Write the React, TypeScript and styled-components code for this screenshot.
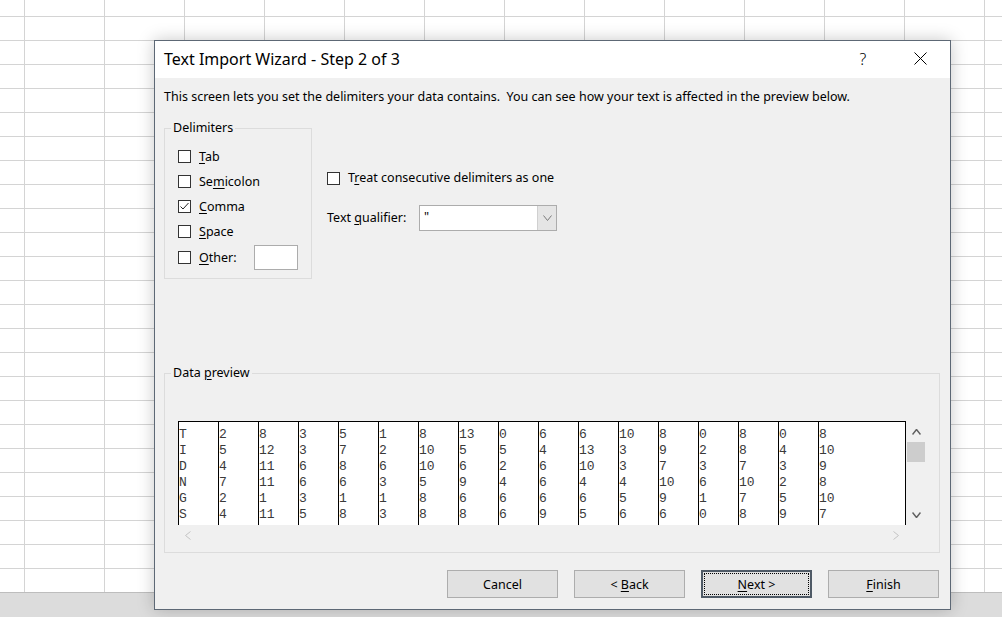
import React from "react";
import styled, { createGlobalStyle } from "styled-components";

const GlobalStyle = createGlobalStyle`
  html, body { margin: 0; padding: 0; background: #fff; }
  body { font-family: "Noto Sans", "Open Sans", sans-serif; overflow: hidden; }
`;

const UI_FONT = `"Noto Sans", "Open Sans", sans-serif`;

const Screen = styled.div`
  position: relative;
  width: 1002px;
  height: 617px;
  display: flex;
  flex-direction: column;
  overflow: hidden;
`;

const Sheet = styled.div`
  height: 592px;
  flex: none;
  background-color: #fff;
  background-image: linear-gradient(to right, #d4d4d4 1px, transparent 1px),
    linear-gradient(to bottom, #d4d4d4 1px, transparent 1px);
  background-size: 80px 24px;
  background-position: 24px 16px;
  border-bottom: 1px solid #bdbdbd;
`;

const StatusBar = styled.div`
  flex: 1;
  background: #dcdcdc;
`;

const Dialog = styled.div`
  position: absolute;
  left: 154px;
  top: 40px;
  width: 797px;
  height: 570px;
  box-sizing: border-box;
  border: 1px solid #5d6875;
  background: #f0f0f0;
  box-shadow: 0 0 16px rgba(0, 0, 0, 0.22);
  display: flex;
  flex-direction: column;
  font-family: ${UI_FONT};
  font-size: 12.5px;
  color: #000;
`;

const TitleBar = styled.div`
  height: 37px;
  box-sizing: border-box;
  flex: none;
  background: #fff;
  display: flex;
  align-items: center;
  padding-left: 9px;
  padding-bottom: 2px;
`;

const TitleText = styled.div`
  flex: 1;
  font-size: 16px;
  color: #000;
`;

const CaptionButton = styled.div<{ $gap?: number }>`
  width: 30px;
  height: 30px;
  display: flex;
  align-items: center;
  justify-content: center;
  margin-right: ${(p) => p.$gap ?? 0}px;
  font-size: 16px;
  font-weight: 300;
  color: #000;
`;

const Body = styled.div`
  flex: 1;
  display: flex;
  flex-direction: column;
  padding: 11px 10px 11px 9px;
`;

const Description = styled.div`
  line-height: 16px;
  white-space: pre;
`;

const TopRow = styled.div`
  display: flex;
  align-items: flex-start;
  gap: 15px;
  margin-top: 16px;
`;

const GroupBox = styled.fieldset<{ $w: number }>`
  margin: 0;
  padding: 0;
  min-width: 0;
  width: ${(p) => p.$w}px;
  box-sizing: border-box;
  border: 1px solid #dcdcdc;
`;

const Legend = styled.legend`
  margin-left: 6px;
  padding: 0 2px;
  font-size: 12.5px;
  line-height: 14px;
`;

const GroupContent = styled.div<{ $pt: number }>`
  padding: ${(p) => p.$pt}px 13px 7px 13px;
  display: flex;
  flex-direction: column;
`;

const CheckRow = styled.label<{ $h?: number }>`
  height: ${(p) => p.$h ?? 25}px;
  display: flex;
  align-items: center;
  gap: 8px;
  line-height: 16px;
`;

const Box = styled.span`
  width: 13px;
  height: 13px;
  box-sizing: border-box;
  border: 1px solid #333;
  background: #fff;
  flex: none;
  display: flex;
  align-items: center;
  justify-content: center;
`;

const U = styled.u`
  text-decoration-thickness: 1px;
  text-underline-offset: 2px;
`;

const SmallInput = styled.div`
  margin-left: auto;
  width: 44px;
  height: 25px;
  box-sizing: border-box;
  border: 1px solid #acacac;
  background: #fff;
`;

const RightColumn = styled.div`
  padding-top: 47px;
  display: flex;
  flex-direction: column;
`;

const QualifierRow = styled.div`
  margin-top: 17px;
  display: flex;
  align-items: center;
  height: 26px;
  line-height: 16px;
`;

const QualifierLabel = styled.span`
  width: 92px;
`;

const Select = styled.div`
  width: 138px;
  height: 26px;
  box-sizing: border-box;
  border: 1px solid #acacac;
  background: #fff;
  display: flex;
`;

const SelectValue = styled.div`
  flex: 1;
  padding-left: 4px;
  line-height: 22px;
`;

const SelectButton = styled.div`
  width: 18px;
  background: #e5e5e5;
  border-left: 1px solid #d0d0d0;
  display: flex;
  align-items: center;
  justify-content: center;
`;

const PreviewGroup = styled(GroupBox)`
  margin-top: 87px;
`;

const PreviewGrid = styled.div`
  display: grid;
  grid-template-columns: 728px 20px;
  grid-template-rows: 104px 20px;
`;

const Table = styled.div`
  box-sizing: border-box;
  border-top: 1px solid #000;
  border-right: 1px solid #000;
  background: #fff;
  display: flex;
  overflow: hidden;
`;

const Column = styled.div<{ $last?: boolean }>`
  box-sizing: border-box;
  width: ${(p) => (p.$last ? "auto" : "40px")};
  flex: ${(p) => (p.$last ? 1 : "none")};
  border-left: 1px solid #000;
  padding-top: 5px;
  font-family: "Liberation Mono", "Courier New", monospace;
  font-size: 13px;
  line-height: 16px;
  color: #3a3a3a;
`;

const Cell = styled.div`
  height: 16px;
  white-space: pre;
`;

const VScroll = styled.div`
  display: flex;
  flex-direction: column;
  background: #f0f0f0;
`;

const ArrowButton = styled.div<{ $h?: number }>`
  height: ${(p) => p.$h ?? 21}px;
  width: 20px;
  display: flex;
  align-items: center;
  justify-content: center;
  flex: none;
`;

const Thumb = styled.div`
  height: 20px;
  width: 18px;
  margin-left: 1px;
  background: #cdcdcd;
`;

const Spacer = styled.div`
  flex: 1;
`;

const HScroll = styled.div`
  display: flex;
  justify-content: space-between;
  align-items: center;
  background: #f0f0f0;
`;

const Corner = styled.div`
  background: #f0f0f0;
`;

const ButtonRow = styled.div`
  display: flex;
  justify-content: flex-end;
  gap: 16px;
  margin-top: auto;
  padding-right: 1px;
`;

const Button = styled.div<{ $default?: boolean }>`
  width: 111px;
  height: 28px;
  box-sizing: border-box;
  display: flex;
  align-items: center;
  justify-content: center;
  padding-top: 2px;
  background: #e1e1e1;
  border: ${(p) => (p.$default ? "2px solid #4f5a66" : "1px solid #adadad")};
  outline: ${(p) => (p.$default ? "1px dotted #000" : "none")};
  outline-offset: -4px;
  font-size: 12.5px;
  line-height: 16px;
  white-space: pre;
`;

const Check = () => (
  <svg width="11" height="11" viewBox="0 0 11 11">
    <polyline points="1.5,5.5 4,8 9.5,2" fill="none" stroke="#222" strokeWidth="1" />
  </svg>
);

const CheckBox = ({ checked }: { checked?: boolean }) => <Box>{checked ? <Check /> : null}</Box>;

const Chevron = ({
  dir,
  color,
  w = 9,
  sw = 1,
}: {
  dir: "up" | "down" | "left" | "right";
  color: string;
  w?: number;
  sw?: number;
}) => {
  const h = Math.round(w / 2) + 1;
  if (dir === "up" || dir === "down") {
    const pts =
      dir === "down"
        ? `0.5,0.5 ${w / 2},${h - 0.5} ${w - 0.5},0.5`
        : `0.5,${h - 0.5} ${w / 2},0.5 ${w - 0.5},${h - 0.5}`;
    return (
      <svg width={w} height={h} viewBox={`0 0 ${w} ${h}`}>
        <polyline points={pts} fill="none" stroke={color} strokeWidth={sw} />
      </svg>
    );
  }
  const pts =
    dir === "right"
      ? `0.5,0.5 ${h - 0.5},${w / 2} 0.5,${w - 0.5}`
      : `${h - 0.5},0.5 0.5,${w / 2} ${h - 0.5},${w - 0.5}`;
  return (
    <svg width={h} height={w} viewBox={`0 0 ${h} ${w}`}>
      <polyline points={pts} fill="none" stroke={color} strokeWidth={sw} />
    </svg>
  );
};

const CloseIcon = () => (
  <svg width="13" height="13" viewBox="0 0 13 13">
    <path d="M0.5 0.5 L12.5 12.5 M12.5 0.5 L0.5 12.5" stroke="#000" strokeWidth="1" fill="none" />
  </svg>
);

const columns: string[][] = [
  ["T", "I", "D", "N", "G", "S"],
  ["2", "5", "4", "7", "2", "4"],
  ["8", "12", "11", "11", "1", "11"],
  ["3", "3", "6", "6", "3", "5"],
  ["5", "7", "8", "6", "1", "8"],
  ["1", "2", "6", "3", "1", "3"],
  ["8", "10", "10", "5", "8", "8"],
  ["13", "5", "6", "9", "6", "8"],
  ["0", "5", "2", "4", "6", "6"],
  ["6", "4", "6", "6", "6", "9"],
  ["6", "13", "10", "4", "6", "5"],
  ["10", "3", "3", "4", "5", "6"],
  ["8", "9", "7", "10", "9", "6"],
  ["0", "2", "3", "6", "1", "0"],
  ["8", "8", "7", "10", "7", "8"],
  ["0", "4", "3", "2", "5", "9"],
  ["8", "10", "9", "8", "10", "7"],
];

export default function App() {
  return (
    <>
      <GlobalStyle />
      <Screen>
        <Sheet />
        <StatusBar />
        <Dialog>
          <TitleBar>
            <TitleText>Text Import Wizard - Step 2 of 3</TitleText>
            <CaptionButton $gap={27}>?</CaptionButton>
            <CaptionButton $gap={15}>
              <CloseIcon />
            </CaptionButton>
          </TitleBar>
          <Body>
            <Description>
              {"This screen lets you set the delimiters your data contains.  You can see how your text is affected in the preview below."}
            </Description>
            <TopRow>
              <GroupBox $w={148}>
                <Legend>Delimiters</Legend>
                <GroupContent $pt={9}>
                  <CheckRow>
                    <CheckBox />
                    <span>
                      <U>T</U>ab
                    </span>
                  </CheckRow>
                  <CheckRow>
                    <CheckBox />
                    <span>
                      Se<U>m</U>icolon
                    </span>
                  </CheckRow>
                  <CheckRow>
                    <CheckBox checked />
                    <span>
                      <U>C</U>omma
                    </span>
                  </CheckRow>
                  <CheckRow>
                    <CheckBox />
                    <span>
                      <U>S</U>pace
                    </span>
                  </CheckRow>
                  <CheckRow $h={27}>
                    <CheckBox />
                    <span>
                      <U>O</U>ther:
                    </span>
                    <SmallInput />
                  </CheckRow>
                </GroupContent>
              </GroupBox>
              <RightColumn>
                <CheckRow $h={20}>
                  <CheckBox />
                  <span>
                    T<U>r</U>eat consecutive delimiters as one
                  </span>
                </CheckRow>
                <QualifierRow>
                  <QualifierLabel>
                    Text <U>q</U>ualifier:
                  </QualifierLabel>
                  <Select>
                    <SelectValue>"</SelectValue>
                    <SelectButton>
                      <Chevron dir="down" color="#7a7a7a" w={9} />
                    </SelectButton>
                  </Select>
                </QualifierRow>
              </RightColumn>
            </TopRow>
            <PreviewGroup $w={776}>
              <Legend>
                Data <U>p</U>review
              </Legend>
              <GroupContent $pt={41}>
                <PreviewGrid>
                  <Table>
                    {columns.map((col, i) => (
                      <Column key={i} $last={i === columns.length - 1}>
                        {col.map((v, j) => (
                          <Cell key={j}>{v}</Cell>
                        ))}
                      </Column>
                    ))}
                  </Table>
                  <VScroll>
                    <ArrowButton>
                      <Chevron dir="up" color="#606060" w={9} sw={1.5} />
                    </ArrowButton>
                    <Thumb />
                    <Spacer />
                    <ArrowButton>
                      <Chevron dir="down" color="#606060" w={9} sw={1.5} />
                    </ArrowButton>
                  </VScroll>
                  <HScroll>
                    <ArrowButton $h={20}>
                      <Chevron dir="left" color="#c4c4c4" w={9} />
                    </ArrowButton>
                    <ArrowButton $h={20}>
                      <Chevron dir="right" color="#c4c4c4" w={9} />
                    </ArrowButton>
                  </HScroll>
                  <Corner />
                </PreviewGrid>
              </GroupContent>
            </PreviewGroup>
            <ButtonRow>
              <Button>
                <span>Cancel</span>
              </Button>
              <Button>
                <span>
                  {"< "}
                  <U>B</U>ack
                </span>
              </Button>
              <Button $default>
                <span>
                  <U>N</U>
                  {"ext >"}
                </span>
              </Button>
              <Button>
                <span>
                  <U>F</U>inish
                </span>
              </Button>
            </ButtonRow>
          </Body>
        </Dialog>
      </Screen>
    </>
  );
}
